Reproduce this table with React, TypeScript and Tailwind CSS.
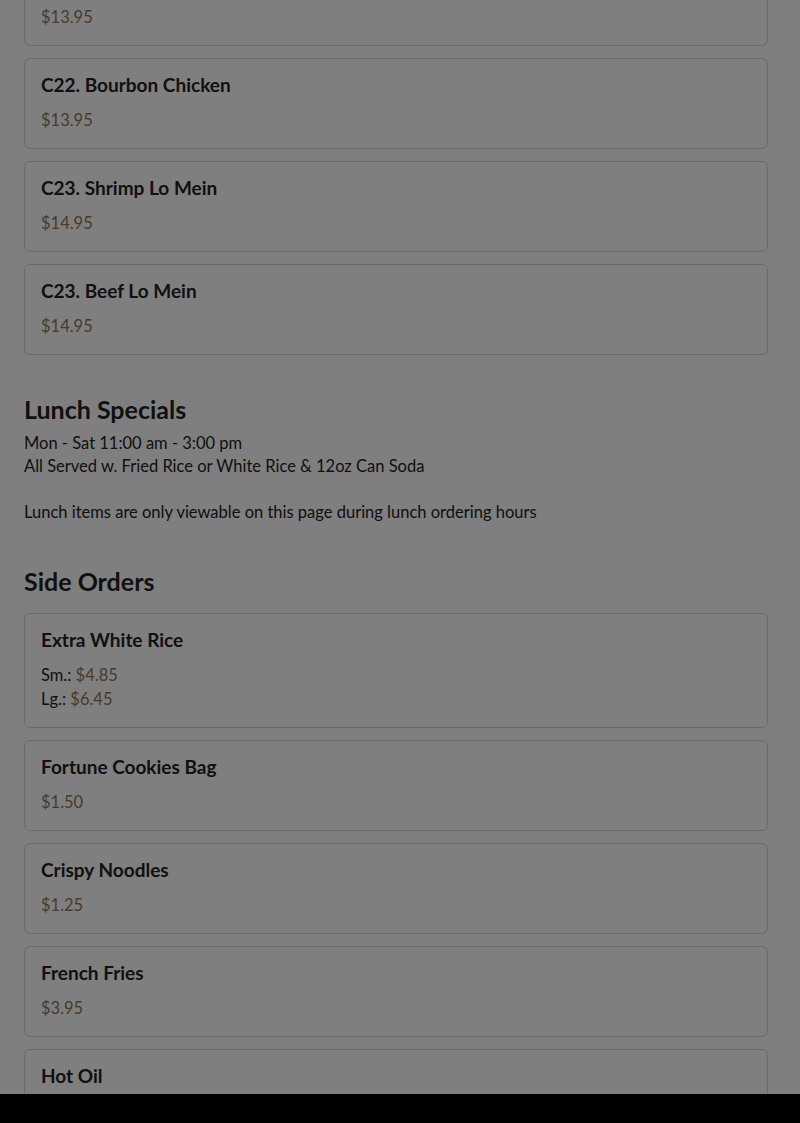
import React from "react";

type Item = {
  name: string;
  prices: { label?: string; price: string }[];
};

const entrees: Item[] = [
  { name: "C21. Sesame Chicken", prices: [{ price: "$13.95" }] },
  { name: "C22. Bourbon Chicken", prices: [{ price: "$13.95" }] },
  { name: "C23. Shrimp Lo Mein", prices: [{ price: "$14.95" }] },
  { name: "C23. Beef Lo Mein", prices: [{ price: "$14.95" }] },
];

const sides: Item[] = [
  {
    name: "Extra White Rice",
    prices: [
      { label: "Sm.:", price: "$4.85" },
      { label: "Lg.:", price: "$6.45" },
    ],
  },
  { name: "Fortune Cookies Bag", prices: [{ price: "$1.50" }] },
  { name: "Crispy Noodles", prices: [{ price: "$1.25" }] },
  { name: "French Fries", prices: [{ price: "$3.95" }] },
  { name: "Hot Oil", prices: [{ price: "$0.50" }] },
];

const MenuCard = ({ item }: { item: Item }) => (
  <div className="rounded-md border border-[#d4d4d4] bg-white px-4 pt-[15px] pb-4">
    <div className="text-[19px] font-bold leading-[22px] text-[#222]">
      {item.name}
    </div>
    <div className="mt-3">
      {item.prices.map((p, i) => (
        <div key={i} className="text-[16.5px] leading-6">
          {p.label && <span className="text-[#222]">{p.label} </span>}
          <span className="text-[#927552]">{p.price}</span>
        </div>
      ))}
    </div>
  </div>
);

export default function App() {
  return (
    <div
      className="relative min-h-[1123px] overflow-hidden bg-white"
      style={{ fontFamily: "Lato, 'Open Sans', sans-serif" }}
    >
      <div className="-mt-[45px] pl-6 pr-8">
        <div className="flex flex-col gap-3">
          {entrees.map((it) => (
            <MenuCard key={it.name} item={it} />
          ))}
        </div>

        <h2 className="mt-[38px] text-[25px] font-bold leading-8 text-[#222]">
          Lunch Specials
        </h2>
        <div className="mt-[7px] text-[16.5px] leading-[23px] text-[#222]">
          Mon - Sat 11:00 am - 3:00 pm
          <br />
          All Served w. Fried Rice or White Rice &amp; 12oz Can Soda
          <br />
          <br />
          Lunch items are only viewable on this page during lunch ordering hours
        </div>

        <h2 className="mt-[41px] text-[25px] font-bold leading-8 text-[#222]">
          Side Orders
        </h2>
        <div className="mt-4 flex flex-col gap-3">
          {sides.map((it) => (
            <MenuCard key={it.name} item={it} />
          ))}
        </div>
      </div>

      {/* modal backdrop */}
      <div className="fixed inset-0 bg-black/50" />
      <div className="fixed inset-x-0 bottom-0 h-[29px] bg-black" />
    </div>
  );
}
